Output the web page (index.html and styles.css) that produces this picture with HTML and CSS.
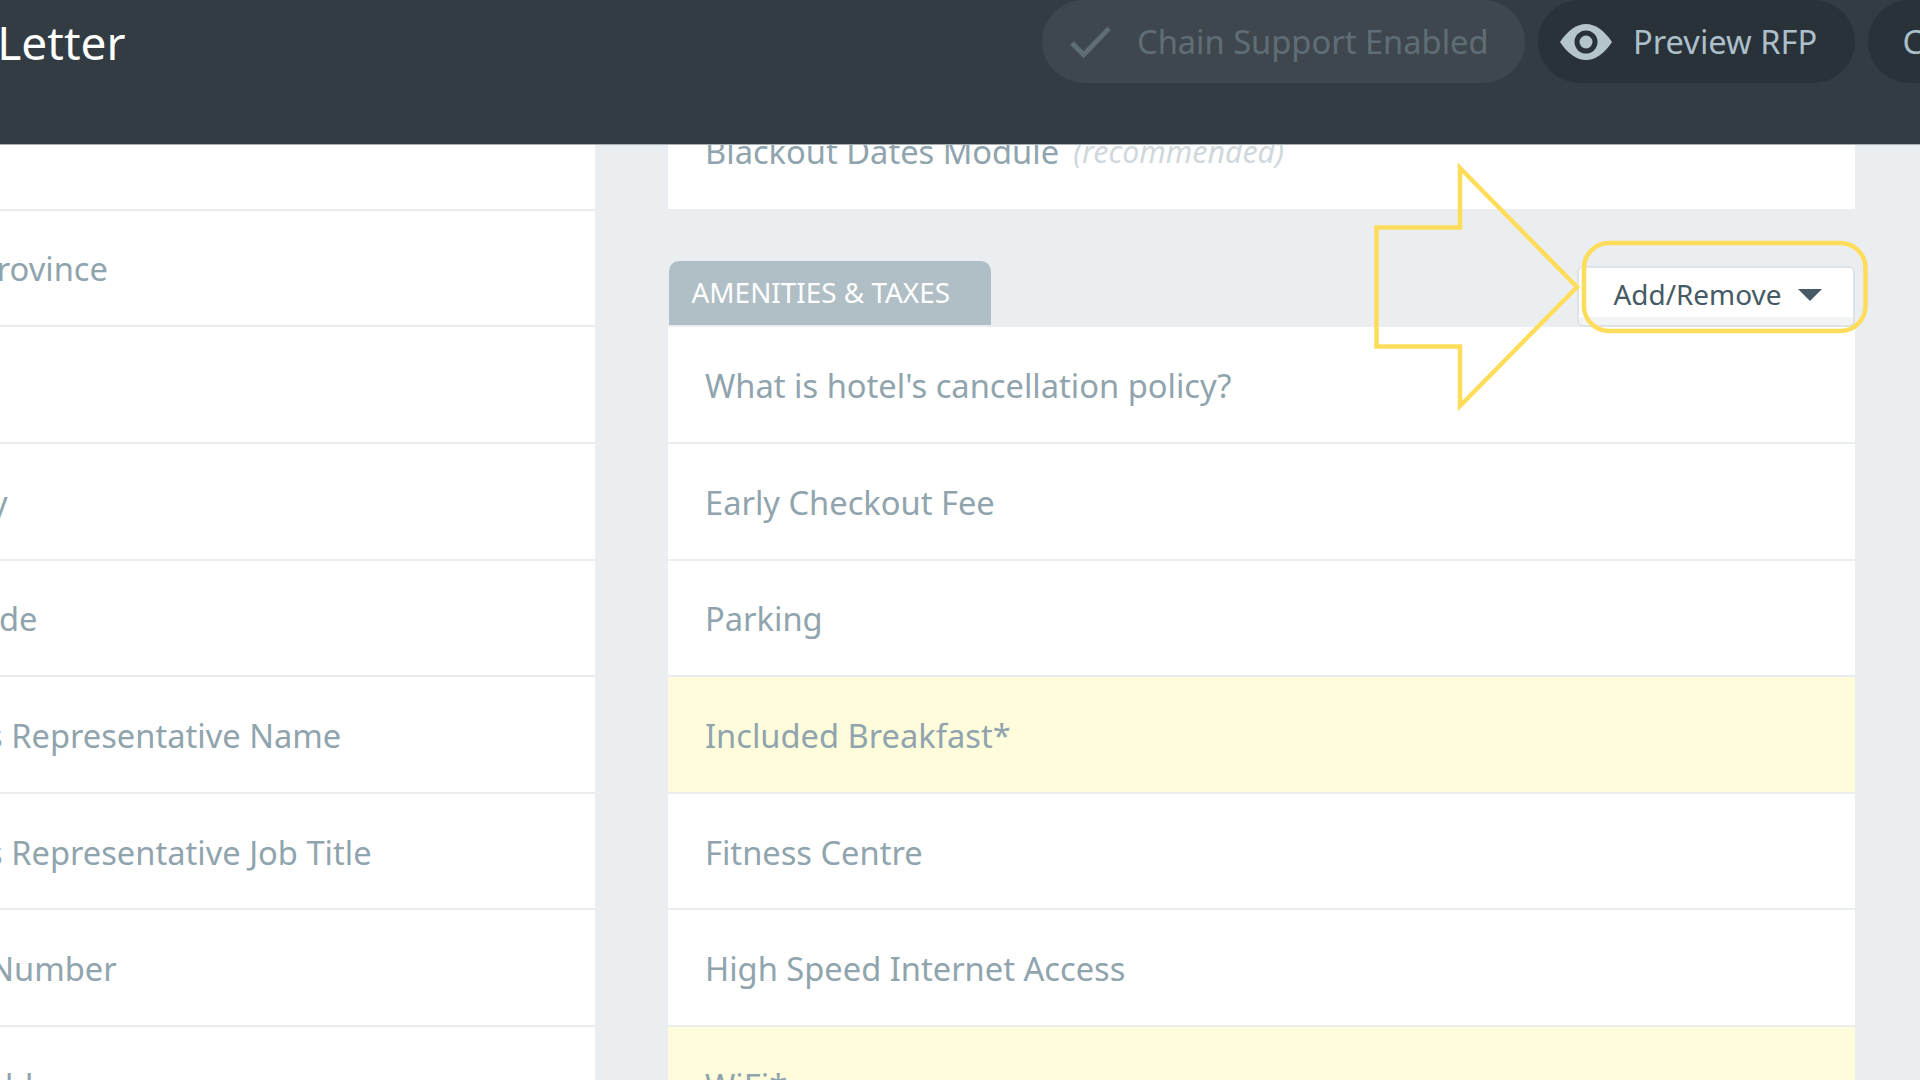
FILE: index.html
```html
<!DOCTYPE html>
<html lang="en">
<head>
<meta charset="utf-8">
<title>Cover Letter</title>
<link rel="stylesheet" href="styles.css">
</head>
<body>
<header class="topbar">
  <h1 class="title">Cover Letter</h1>
  <div class="pill pill-off">
    <svg class="icon-check" viewBox="0 0 42 32"><path d="M2 17 L14 29 L40 2" fill="none" stroke="currentColor" stroke-width="5"/></svg>
    <span>Chain Support Enabled</span>
  </div>
  <div class="pill pill-dark">
    <svg class="icon-eye" viewBox="0 0 52 36"><path d="M0 18 C8 6 17 0 26 0 C35 0 44 6 52 18 C44 30 35 36 26 36 C17 36 8 30 0 18 Z" fill="#b6c5cb"/><circle cx="26" cy="18" r="11.5" fill="#283238"/><circle cx="26" cy="18" r="6.5" fill="#b6c5cb"/></svg>
    <span>Preview RFP</span>
  </div>
  <div class="pill pill-dark pill-next"><span>Continue</span></div>
</header>
<main class="board">
  <section class="col">
    <div class="row label-postal"><span>City</span></div>
    <div class="row label-province"><span>State or Province</span></div>
    <div class="row"></div>
    <div class="row label-country"><span>Country</span></div>
    <div class="row label-postal"><span>Postal Code</span></div>
    <div class="row label-rep"><span>Sales Representative Name</span></div>
    <div class="row label-rep"><span>Sales Representative Job Title</span></div>
    <div class="row label-phone"><span>Phone Number</span></div>
    <div class="row label-email"><span>Email Address</span></div>
  </section>
  <section class="col col-right">
    <div class="row row-scrolled"><span>Blackout Dates Module</span> <em class="hint">(recommended)</em></div>
    <div class="section-head">
      <h2 class="tab">AMENITIES &amp; TAXES</h2>
      <button class="add-btn" type="button">Add/Remove<i class="caret"></i></button>
    </div>
    <div class="row"><span>What is hotel's cancellation policy?</span></div>
    <div class="row"><span>Early Checkout Fee</span></div>
    <div class="row"><span>Parking</span></div>
    <div class="row row-required"><span>Included Breakfast*</span></div>
    <div class="row"><span>Fitness Centre</span></div>
    <div class="row"><span>High Speed Internet Access</span></div>
    <div class="row row-required"><span>WiFi*</span></div>
  </section>
</main>
<svg class="annotation" viewBox="0 0 1920 1080">
  <path d="M1376.5 227.5 H1460 V168 L1577 287 L1460 406 V346.5 H1376.5 Z"/>
  <rect x="1584" y="243" width="281.5" height="88" rx="25"/>
</svg>
</body>
</html>
```
FILE: styles.css
```css
* { box-sizing: border-box; }
html, body { margin: 0; height: 100%; }
body {
  position: relative;
  width: 1920px;
  height: 1080px;
  overflow: hidden;
  background: #eaeef1;
  font-family: "Noto Sans", sans-serif;
}
.topbar {
  position: relative;
  z-index: 2;
  display: flex;
  align-items: flex-start;
  gap: 13px;
  height: 145px;
  background: #323c42;
  border-bottom: 1px solid #a9b0b4;
}
.title {
  flex: 0 0 1029px;
  margin: 8px 0 0;
  font-size: 46px;
  font-weight: 400;
  line-height: 68px;
  color: #fff;
  text-indent: -139px;
  white-space: nowrap;
}
.pill {
  flex: none;
  display: flex;
  align-items: center;
  height: 83px;
  border-radius: 42px;
  font-size: 32.65px;
  white-space: nowrap;
}
.pill-off {
  width: 483px;
  padding-left: 28px;
  gap: 26px;
  background: #3f474e;
  color: #5f6e76;
}
.pill-dark {
  width: 316.5px;
  padding-left: 22px;
  gap: 21px;
  background: #283238;
  color: #adbfca;
}
.pill-next { width: 300px; padding-left: 35px; }
.icon-check { width: 41px; height: 32px; }
.icon-eye { width: 52px; height: 36px; }
.board {
  display: grid;
  grid-template-columns: 794.5px 1187px;
  column-gap: 73px;
  margin: -51px 0 0 -200px;
}
.row {
  display: flex;
  align-items: center;
  gap: 14px;
  height: 116.64px;
  padding: 2px 0 0 37.5px;
  background: #fff;
  border-bottom: 2px solid #e9edf0;
  font-size: 32.65px;
  color: #90a4ae;
  white-space: nowrap;
}
.row-scrolled { padding-top: 0; }
.row-required { background: #fffcdc; }
.hint { font-size: 30.3px; color: #cfd8dc; }
.label-postal { padding-left: 56.5px; }
.label-province { padding-left: 48.6px; }
.label-rep { padding-left: 124px; }
.label-phone { padding-left: 82.5px; }
.label-country { padding-left: 85px; }
.label-email { padding-left: 80px; }
.section-head {
  display: flex;
  justify-content: space-between;
  align-items: flex-end;
  height: 116.64px;
}
.tab {
  height: 64px;
  margin: 0 0 2px 1px;
  padding: 0 41px 2px 23px;
  display: flex;
  align-items: center;
  background: #b0bec5;
  border-radius: 10px 10px 0 0;
  font-size: 27.9px;
  font-weight: 400;
  color: #fff;
}
.add-btn {
  display: flex;
  align-items: center;
  gap: 17px;
  width: 278px;
  height: 61px;
  padding: 0 0 6px 35px;
  background: linear-gradient(#fff 86%, #f3f4f5 86%);
  border: 2px solid #dfe3e6;
  border-radius: 6px;
  font: inherit;
  font-size: 27.9px;
  color: #455a64;
}
.caret {
  width: 0;
  height: 0;
  margin-top: 2px;
  border-left: 12px solid transparent;
  border-right: 12px solid transparent;
  border-top: 12px solid #455a64;
}
.annotation {
  position: absolute;
  top: 0;
  left: 0;
  width: 1920px;
  height: 1080px;
  z-index: 3;
  pointer-events: none;
  fill: none;
  stroke: #ffdc5a;
  stroke-width: 4.5px;
}
```
